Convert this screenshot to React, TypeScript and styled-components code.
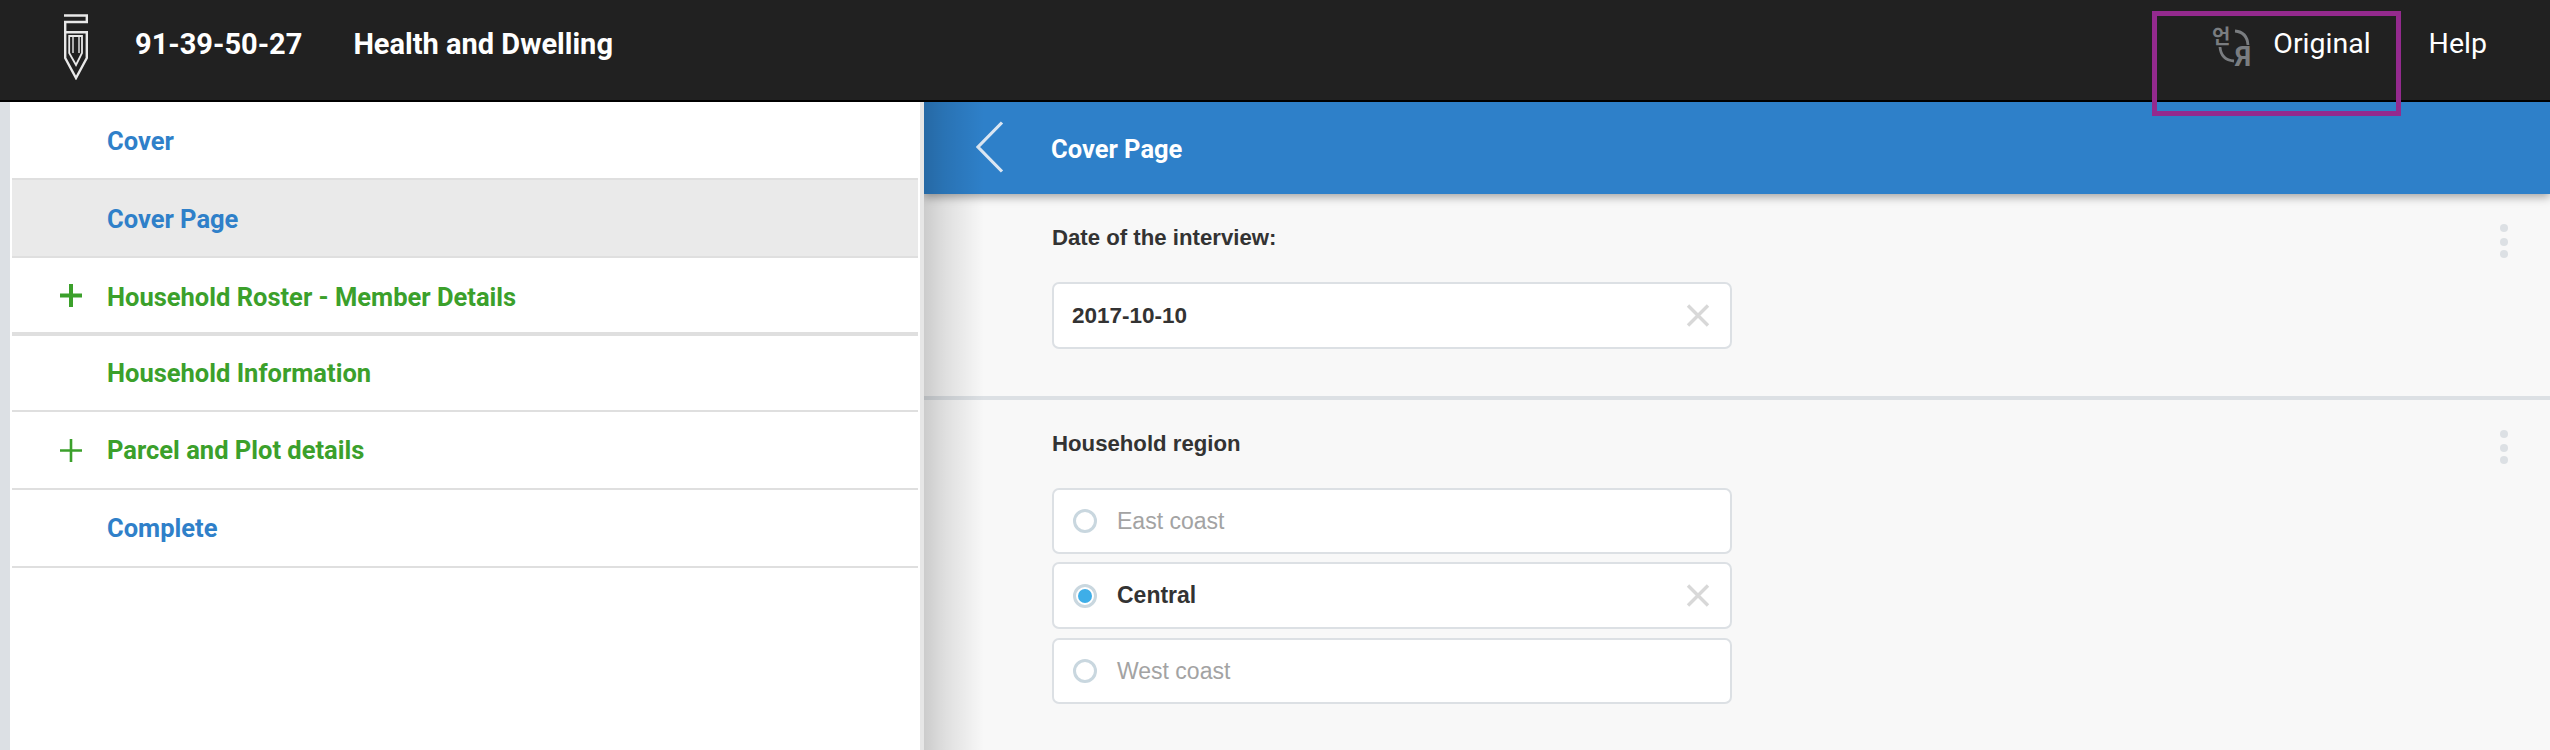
import React from "react";
import styled, { createGlobalStyle } from "styled-components";

const Global = createGlobalStyle`
  html, body { margin: 0; padding: 0; height: 750px; overflow: hidden; background: #fff; }
  #root { height: 750px; }
  * { box-sizing: border-box; }
`;

const Page = styled.div`
  display: flex;
  flex-direction: column;
  height: 750px;
  width: 2550px;
`;

const TopBar = styled.header`
  position: relative;
  z-index: 3;
  flex: none;
  height: 102px;
  border-bottom: 2px solid #000;
  background: #212121;
  display: flex;
  align-items: center;
  padding: 0 63px 0 64px;
  color: #fff;
  font-family: Roboto, "Liberation Sans", sans-serif;
`;

const Logo = styled.svg`
  width: 24px;
  height: 66px;
  margin-right: 47px;
  margin-top: -6px;
  flex: none;
`;

const CaseId = styled.span`
  font-size: 29px;
  font-weight: 700;
  margin-right: 51px;
  margin-top: -12px;
  line-height: 36px;
`;

const Title = styled.span`
  font-size: 29px;
  font-weight: 700;
  margin-top: -12px;
  line-height: 36px;
`;

const TopRight = styled.div`
  margin-left: auto;
  display: flex;
  align-items: center;
  margin-top: -12px;
`;

const TranslateIcon = styled.svg`
  width: 40px;
  height: 42px;
  margin-right: 21px;
  margin-top: 4px;
  overflow: visible;
`;

const TopLink = styled.span<{ $gap?: number }>`
  font-size: 28.5px;
  font-weight: 400;
  line-height: 36px;
  margin-right: ${(p) => p.$gap ?? 0}px;
`;

const Highlight = styled.div`
  position: absolute;
  left: 2152px;
  top: 11px;
  width: 249px;
  height: 105px;
  border: 5px solid #942a8e;
  pointer-events: none;
`;

const Body = styled.div`
  flex: 1;
  display: flex;
  min-height: 0;
`;

const Sidebar = styled.nav`
  flex: none;
  width: 924px;
  background: #fff;
  border-left: 10px solid #dce0e4;
  border-right: 4px solid #e6e6e6;
  padding: 0 2px;
  font-family: Roboto, "Liberation Sans", sans-serif;
`;

const NavRow = styled.div<{ $active?: boolean; $color: string; $h?: number; $thick?: boolean; $top?: number }>`
  height: ${(p) => p.$h ?? 78}px;
  display: flex;
  align-items: center;
  background: ${(p) => (p.$active ? "#eaeaea" : "#fff")};
  border-bottom: ${(p) => (p.$thick ? 4 : 2)}px solid #dfdfdf;
  color: ${(p) => p.$color};
  font-size: 25.5px;
  font-weight: 700;
  padding: ${(p) => p.$top ?? 0}px 0 0 95px;
  position: relative;
`;

const PlusIcon = styled.svg`
  position: absolute;
  left: 48px;
  top: 50%;
  margin-top: -11px;
  width: 22px;
  height: 23px;
`;

const Main = styled.main`
  flex: 1;
  position: relative;
  overflow: hidden;
  background: #f8f8f8;
  &::before {
    content: "";
    position: absolute;
    left: 0;
    top: 0;
    bottom: 0;
    width: 60px;
    z-index: 2;
    pointer-events: none;
    background: linear-gradient(to right, rgba(0, 0, 0, 0.18), rgba(0, 0, 0, 0.1) 35%, rgba(0, 0, 0, 0));
  }
`;

const SectionBar = styled.div`
  position: relative;
  z-index: 1;
  height: 92px;
  background: #2e80c9;
  box-shadow: 0 3px 9px rgba(0, 0, 0, 0.35);
  display: flex;
  align-items: center;
  padding: 0 0 0 52px;
  color: #fff;
  font-family: Roboto, "Liberation Sans", sans-serif;
  font-size: 25.5px;
  font-weight: 700;
`;

const BarTitle = styled.span`
  margin-top: 2px;
`;

const BackIcon = styled.svg`
  width: 28px;
  height: 52px;
  margin-right: 47px;
  margin-top: -2px;
`;

const Question = styled.section<{ $h: number }>`
  height: ${(p) => p.$h}px;
  display: flex;
  justify-content: space-between;
  padding: 29px 42px 0 128px;
  font-family: "Liberation Sans", Arial, sans-serif;
`;

const Divider = styled.div`
  height: 4px;
  background: #dce0e4;
`;

const Field = styled.div`
  width: 680px;
`;

const Label = styled.div`
  height: 30px;
  line-height: 30px;
  font-size: 22.2px;
  font-weight: 700;
  color: #333;
  margin-bottom: 29px;
`;

const Box = styled.div<{ $h?: number; $after?: number }>`
  height: ${(p) => p.$h ?? 67}px;
  margin-bottom: ${(p) => p.$after ?? 0}px;
  background: #fff;
  border: 2px solid #dce0e4;
  border-radius: 7px;
  display: flex;
  align-items: center;
  padding: 0 20px 0 19px;
`;

const Value = styled.span`
  font-size: 22.5px;
  font-weight: 700;
  color: #333;
  margin-left: -1px;
`;

const OptionText = styled.span<{ $on?: boolean }>`
  font-size: 23px;
  font-weight: ${(p) => (p.$on ? 700 : 400)};
  color: ${(p) => (p.$on ? "#333" : "#a3a3a3")};
  margin-left: 20px;
`;

const Radio = styled.span<{ $on?: boolean }>`
  flex: none;
  width: 24px;
  height: 24px;
  border-radius: 50%;
  border: 3px solid #c9d7df;
  background: #fff;
  display: flex;
  align-items: center;
  justify-content: center;
  &::after {
    content: "";
    display: ${(p) => (p.$on ? "block" : "none")};
    width: 14px;
    height: 14px;
    border-radius: 50%;
    background: #3eaee8;
  }
`;

const Clear = styled.svg`
  margin-left: auto;
  width: 24px;
  height: 23px;
  flex: none;
`;

const Dots = styled.svg`
  width: 8px;
  height: 34px;
  margin-top: 1px;
  flex: none;
`;

const Kebab = () => (
  <Dots viewBox="0 0 8 34">
    <circle cx="4" cy="4" r="4" fill="#dce0e4" />
    <circle cx="4" cy="18" r="4" fill="#dce0e4" />
    <circle cx="4" cy="30" r="4" fill="#dce0e4" />
  </Dots>
);

const ClearX = () => (
  <Clear viewBox="0 0 24 23">
    <path d="M2 1.5 L22 21.5 M22 1.5 L2 21.5" stroke="#d8d8d8" strokeWidth="3.4" fill="none" />
  </Clear>
);

const Plus = ({ w }: { w: number }) => (
  <PlusIcon viewBox="0 0 22 23">
    <path d="M0 11.5 H22 M11 0 V23" stroke="#3ba02b" strokeWidth={w} fill="none" />
  </PlusIcon>
);

const BLUE = "#2f80c9";
const GREEN = "#3ba02b";

export default function App() {
  return (
    <Page>
      <Global />
      <TopBar>
        <Logo viewBox="0 0 24 66">
          <g fill="none" stroke="#e8e8e8" strokeWidth="2.4">
            <path d="M0 1.5 H22.8 V8 H1.2 V18.2 H24" />
            <path d="M22.8 17 V44 L12 64 L1.2 44 V18" />
            <path d="M5.2 22 H18 V39 L12 51 L5.2 39 Z" strokeWidth="1.8" />
            <path d="M9 22 V39 M15 22 V39" strokeWidth="1.4" />
          </g>
        </Logo>
        <CaseId>91-39-50-27</CaseId>
        <Title>Health and Dwelling</Title>
        <TopRight>
          <TranslateIcon viewBox="0 0 40 42">
            <text x="0" y="19" fontSize="20" fontWeight="700" fontFamily="'Noto Sans CJK KR', sans-serif" fill="#7a7d80">언</text>
            <text x="23" y="41" fontSize="27" fontWeight="700" fontFamily="Roboto, sans-serif" fill="#7a7d80">Я</text>
            <path d="M23 6 Q35 7 36 20 M8 22 Q9 35 22 36" stroke="#7a7d80" strokeWidth="2.8" fill="none" />
          </TranslateIcon>
          <TopLink $gap={58}>Original</TopLink>
          <TopLink>Help</TopLink>
        </TopRight>
        <Highlight />
      </TopBar>
      <Body>
        <Sidebar>
          <NavRow $color={BLUE} $top={1}>Cover</NavRow>
          <NavRow $color={BLUE} $active $top={1}>Cover Page</NavRow>
          <NavRow $color={GREEN} $thick $top={3}><Plus w={4} />Household Roster - Member Details</NavRow>
          <NavRow $color={GREEN} $h={76}>Household Information</NavRow>
          <NavRow $color={GREEN}><Plus w={2.6} />Parcel and Plot details</NavRow>
          <NavRow $color={BLUE}>Complete</NavRow>
        </Sidebar>
        <Main>
          <SectionBar>
            <BackIcon viewBox="0 0 28 52">
              <path d="M26 1.5 L2 26 L26 50.5" stroke="#dbe6f2" strokeWidth="3.2" fill="none" />
            </BackIcon>
            <BarTitle>Cover Page</BarTitle>
          </SectionBar>
          <Question $h={202}>
            <Field>
              <Label>Date of the interview:</Label>
              <Box>
                <Value>2017-10-10</Value>
                <ClearX />
              </Box>
            </Field>
            <Kebab />
          </Question>
          <Divider />
          <Question $h={320}>
            <Field>
              <Label>Household region</Label>
              <Box $h={66} $after={8}>
                <Radio />
                <OptionText>East coast</OptionText>
              </Box>
              <Box $h={67} $after={9}>
                <Radio $on />
                <OptionText $on>Central</OptionText>
                <ClearX />
              </Box>
              <Box $h={66}>
                <Radio />
                <OptionText>West coast</OptionText>
              </Box>
            </Field>
            <Kebab />
          </Question>
        </Main>
      </Body>
    </Page>
  );
}
